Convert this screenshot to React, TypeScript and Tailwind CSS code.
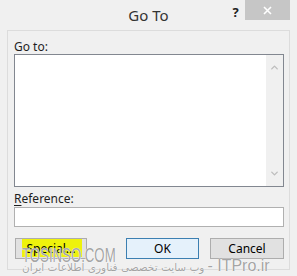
import { ChevronUp, ChevronDown } from "lucide-react";

const font = "font-['Noto_Sans','Segoe_UI',sans-serif]";

const DialogButton = ({
  children,
  primary,
  className = "",
}: {
  children: React.ReactNode;
  primary?: boolean;
  className?: string;
}) => (
  <div
    className={`relative h-[21px] flex items-center justify-center bg-[#e1e1e1] border text-[12px] leading-none text-black ${
      primary ? "border-[#3c7fb1] bg-[#e5f1fb]" : "border-[#adadad]"
    } ${className}`}
  >
    {children}
  </div>
);

export default function App() {
  return (
    <div className={`relative w-[297px] h-[276px] bg-[#f0f0f0] overflow-hidden text-[#1e1e1e] ${font}`}>
      {/* Title bar */}
      <div className="h-[30px] flex items-start">
        <div className="w-[71px]" />
        <div className="flex-1 text-center text-[15px] leading-[30px] text-[#333]">Go To</div>
        <div className="w-[19px] pt-[4px] text-center text-[13px] font-bold leading-[16px] text-[#222]">?</div>
        <div className="w-[45px] h-[20px] bg-[#c6c6c6] flex items-center justify-center">
          <svg width="9" height="9" viewBox="0 0 9 9">
            <path d="M1 1L8 8M8 1L1 8" stroke="#fff" strokeWidth="1.6" />
          </svg>
        </div>
        <div className="w-[7px]" />
      </div>

      {/* Body */}
      <div className="mx-[7px] h-[240px] border border-[#dcdcdc] pl-[6px] pr-[5px] pt-[8px] flex flex-col">
        <div className="h-[15px] text-[12px] leading-[15px]">Go to:</div>
        <div className="h-[133px] border border-[#828790] bg-white flex justify-end">
          <div className="w-[17px] bg-[#f0f0f0] flex flex-col items-center justify-between py-[7px]">
            <ChevronUp className="w-[11px] h-[11px] text-[#bdbdbd]" strokeWidth={3} />
            <ChevronDown className="w-[11px] h-[11px] text-[#bdbdbd]" strokeWidth={3} />
          </div>
        </div>
        <div className="mt-[4px] h-[15px] text-[12px] leading-[15px]">
          <span className="underline underline-offset-2">R</span>eference:
        </div>
        <div className="mt-[1px] h-[20px] border border-[#b0b0b0] bg-white" />
        <div className="mt-[11px] flex pl-[1px]">
          <DialogButton className="w-[72px] overflow-hidden">
            <span className="absolute left-[6px] top-0 w-[60px] h-[18px] bg-[#eef20c]" />
            <span className="relative">Special...</span>
          </DialogButton>
          <DialogButton primary className="ml-auto w-[73px]">
            OK
          </DialogButton>
          <DialogButton className="ml-[11px] w-[74px]">Cancel</DialogButton>
        </div>
      </div>

      {/* Watermark */}
      <div className="absolute left-[22px] top-[245px] text-[20px] leading-none font-['Liberation_Sans',sans-serif] text-[#8c8c8c]/80 origin-left scale-x-[0.66] [text-shadow:0_0_1px_#fff,0_0_1px_#fff]">
        TOSINSO.COM
      </div>
      <div className="absolute left-[22px] top-[254px] flex items-baseline gap-[3px] text-[#8c8c8c]/80 [text-shadow:0_0_1px_#fff,0_0_1px_#fff] whitespace-nowrap">
        <span dir="rtl" className="text-[10.5px] font-['DejaVu_Sans',sans-serif]">
          وب سایت تخصصی فناوری اطلاعات ایران
        </span>
        <span className="text-[16px] font-['Liberation_Sans',sans-serif]">- ITPro.ir</span>
      </div>
    </div>
  );
}
